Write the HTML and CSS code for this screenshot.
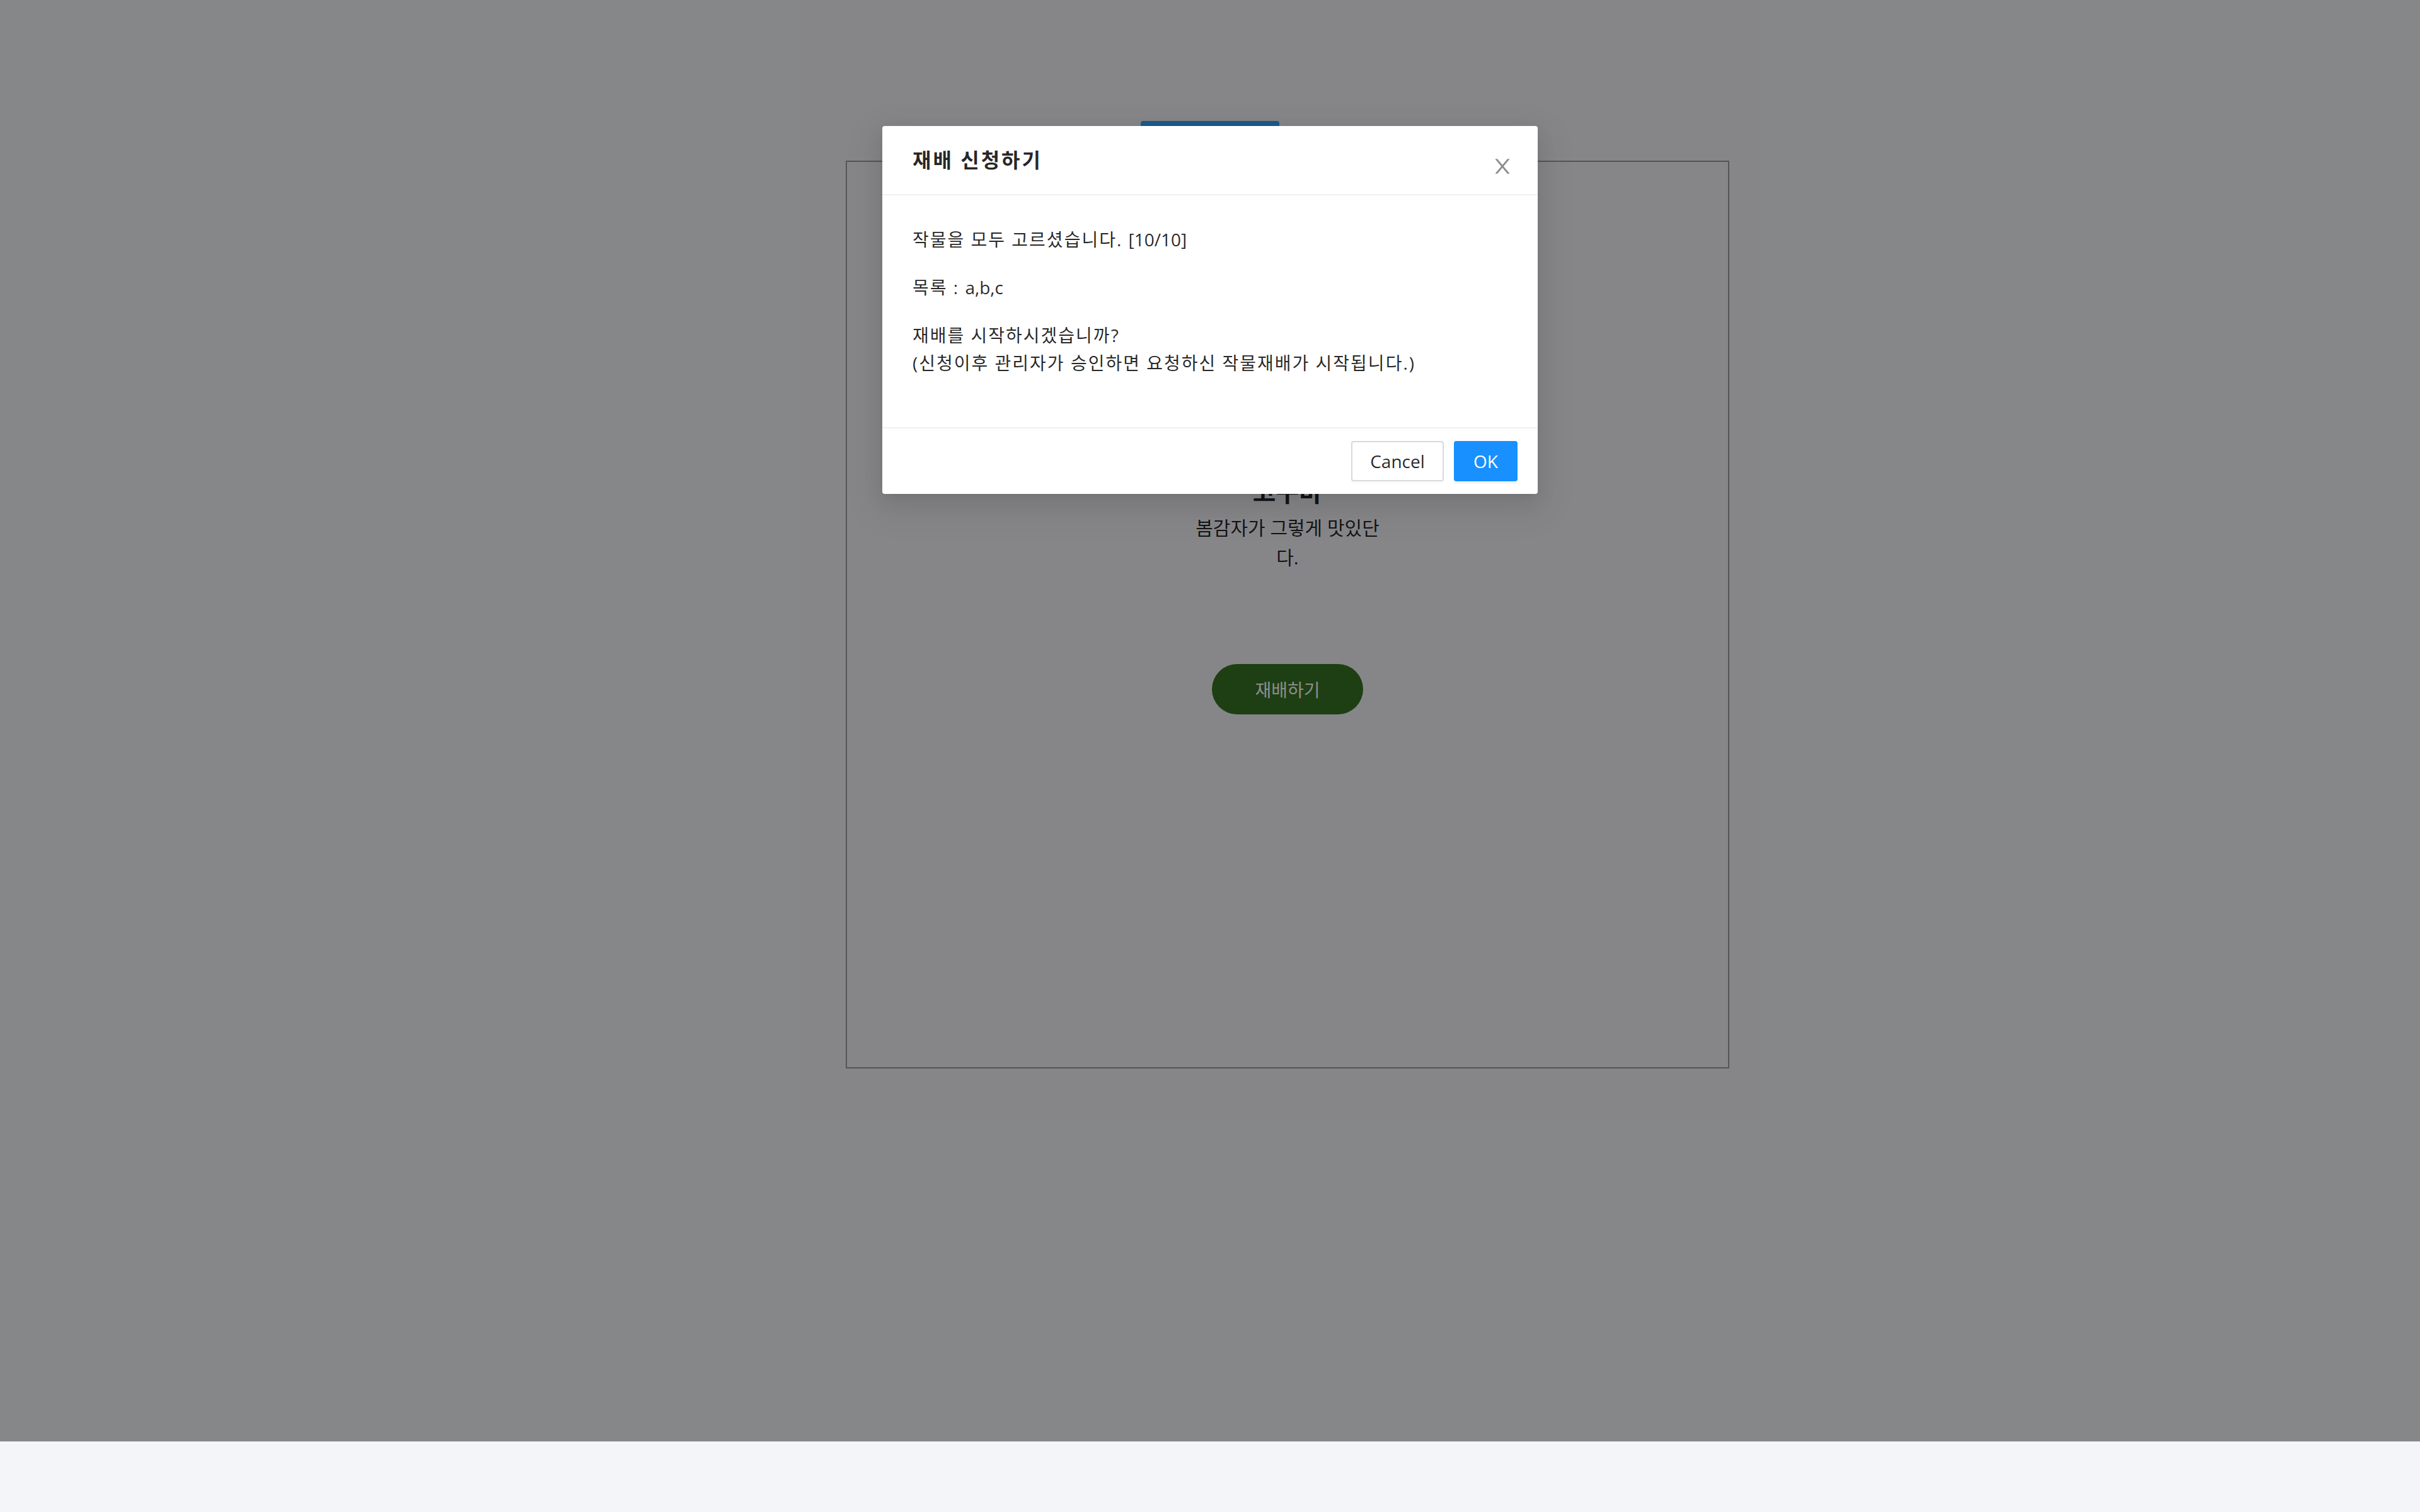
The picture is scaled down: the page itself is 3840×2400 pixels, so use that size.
FILE: index.html
```html
<!DOCTYPE html>
<html lang="ko">
<head>
<meta charset="utf-8">
<title>재배 신청하기</title>
<link rel="stylesheet" href="styles.css">
</head>
<body>
<div class="page">
  <div class="topbar">
    <div class="tab-indicator"></div>
  </div>
  <div class="layout">
    <div class="sidebar-space"></div>
    <main class="content">
      <section class="card">
        <h4 class="crop-title">고구마</h4>
        <p class="crop-desc">봄감자가 그렇게 맛있단다.</p>
        <button class="grow-btn">재배하기</button>
      </section>
    </main>
  </div>

  <div class="mask"></div>
  <div class="modal" role="dialog">
    <div class="modal-header">
      <div class="modal-title">재배 신청하기</div>
      <button class="modal-close" aria-label="Close">
        <svg viewBox="64 64 896 896" width="32" height="32" fill="currentColor"><path d="M563.8 512l262.5-312.9c4.4-5.2.7-13.1-6.1-13.1h-79.8c-4.7 0-9.2 2.1-12.3 5.7L511.6 449.8 295.1 191.7c-3-3.600-7.5-5.7-12.3-5.7H203c-6.8 0-10.5 7.9-6.1 13.1L459.4 512 196.9 824.9A7.95 7.95 0 00203 838h79.8c4.7 0 9.2-2.1 12.3-5.7l216.5-258.1 216.5 258.1c3 3.6 7.5 5.7 12.3 5.7h79.8c6.8 0 10.5-7.9 6.1-13.1L563.8 512z"/></svg>
      </button>
    </div>
    <div class="modal-body">
      <p>작물을 모두 고르셨습니다. <span class="latin">[10/10]</span></p>
      <p>목록 : <span class="latin">a,b,c</span></p>
      <p>재배를 시작하시겠습니까?<br>(신청이후 관리자가 승인하면 요청하신 작물재배가 시작됩니다.)</p>
    </div>
    <div class="modal-footer">
      <button class="btn btn-default">Cancel</button>
      <button class="btn btn-primary">OK</button>
    </div>
  </div>
</div>
<div class="bottom-area"></div>
</body>
</html>
```

FILE: styles.css
```css
html, body {
  margin: 0;
  padding: 0;
}
body {
  background: #f4f5f9;
  font-family: "Open Sans", "Noto Sans CJK KR", sans-serif;
  color: rgba(0, 0, 0, 0.85);
  width: 3840px;
  height: 2400px;
  overflow: hidden;
}
.page {
  position: relative;
  height: 2288px;
}
.topbar {
  padding-top: 192px;
}
.tab-indicator {
  width: 220px;
  height: 12px;
  margin: 0 auto;
  background: #38a4fa;
  border-radius: 4px 4px 0 0;
}
.layout {
  display: flex;
}
.sidebar-space {
  width: 246px;
  flex: none;
}
.content {
  flex: 1;
  display: flex;
  justify-content: center;
}
.card {
  box-sizing: border-box;
  width: 1402px;
  height: 1441px;
  margin-top: 51px;
  border: 2px solid #9b9b9b;
  display: flex;
  flex-direction: column;
  align-items: center;
  padding-top: 496px;
}
.crop-title {
  margin: 0;
  font-size: 40px;
  line-height: 56px;
  font-weight: 700;
  color: rgba(0, 0, 0, 0.85);
}
.crop-desc {
  margin: 5px 0 0;
  width: 300px;
  text-align: center;
  font-size: 30px;
  line-height: 47px;
  color: rgba(0, 0, 0, 0.85);
}
.grow-btn {
  margin-top: 146px;
  width: 240px;
  height: 80px;
  border: none;
  border-radius: 40px;
  background: #387323;
  color: #fff;
  font-family: inherit;
  font-size: 28px;
  padding: 0;
}
.mask {
  position: absolute;
  inset: 0;
  background: rgba(0, 0, 0, 0.45);
}
.modal {
  position: absolute;
  top: 200px;
  left: 50%;
  transform: translateX(-50%);
  width: 1040px;
  background: #fff;
  border-radius: 4px;
  box-shadow: 0 6px 12px -8px rgba(0, 0, 0, 0.12),
              0 12px 32px 0 rgba(0, 0, 0, 0.08),
              0 18px 56px 16px rgba(0, 0, 0, 0.05);
}
.modal-header {
  padding: 32px 48px;
  border-bottom: 2px solid #f0f0f0;
}
.modal-title {
  font-size: 32px;
  line-height: 44px;
  font-weight: 700;
  letter-spacing: 3px;
  color: rgba(0, 0, 0, 0.85);
}
.modal-close {
  position: absolute;
  top: 0;
  right: 0;
  width: 112px;
  height: 112px;
  padding: 16px 0 0;
  border: none;
  background: transparent;
  color: rgba(0, 0, 0, 0.45);
  display: flex;
  align-items: center;
  justify-content: center;
}
.modal-close svg {
  display: block;
}
.modal-body {
  padding: 48px;
  font-size: 28px;
  line-height: 44px;
  letter-spacing: 2px;
}
.modal-body p {
  margin: 0 0 32px;
}
.modal-body .latin {
  letter-spacing: 0;
}
.modal-footer {
  border-top: 2px solid #f0f0f0;
  padding: 20px 32px;
  display: flex;
  justify-content: flex-end;
  gap: 16px;
}
.btn {
  box-sizing: border-box;
  height: 64px;
  padding: 0;
  border-radius: 4px;
  font-family: inherit;
  font-size: 28px;
  border: 2px solid #d9d9d9;
  box-shadow: 0 4px 0 rgba(0, 0, 0, 0.015);
}
.btn-default {
  width: 147px;
  background: #fff;
  color: rgba(0, 0, 0, 0.85);
}
.btn-primary {
  width: 101px;
  background: #1890ff;
  border-color: #1890ff;
  color: #fff;
  box-shadow: 0 4px 0 rgba(0, 0, 0, 0.045);
}
.bottom-area {
  height: 112px;
  background: #f4f5f9;
}
```
